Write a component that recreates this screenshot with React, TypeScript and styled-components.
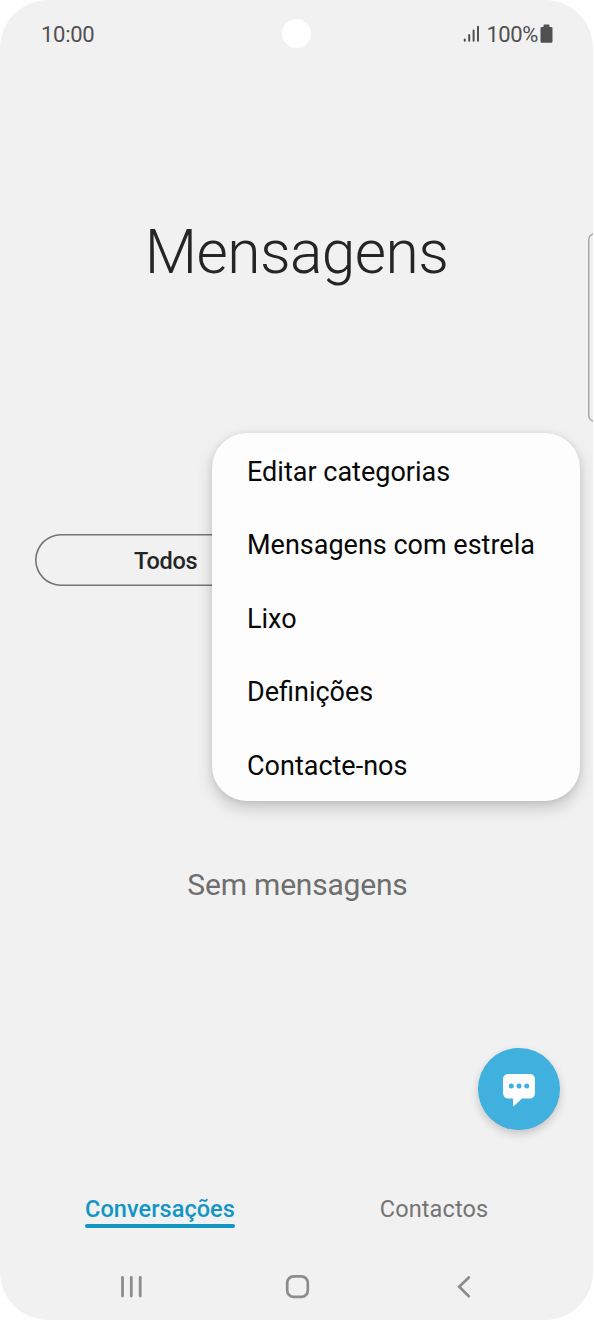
import React from "react";
import styled, { createGlobalStyle } from "styled-components";

const GlobalStyle = createGlobalStyle`
  * { box-sizing: border-box; }
  body { margin: 0; background: #fff; font-family: Roboto, "Noto Sans", sans-serif; }
  button { font: inherit; color: inherit; background: none; border: 0; padding: 0; }
`;

const Screen = styled.div`
  position: relative;
  display: flex;
  flex-direction: column;
  width: 593px;
  height: 1320px;
  background: #f1f1f1;
  border-radius: 48px;
  overflow: hidden;
`;

const StatusBar = styled.header`
  display: grid;
  grid-template-columns: 1fr 29px 1fr;
  align-items: center;
  height: 68px;
  padding: 0 40px 0 41px;
  color: #505050;
  font-size: 22px;
  line-height: 26px;
`;

const Clock = styled.span`
  padding-top: 2px;
  letter-spacing: -0.3px;
`;

const Camera = styled.div`
  width: 29px;
  height: 29px;
  margin: -1px 0 0 -1px;
  border-radius: 50%;
  background: #fff;
`;

const StatusIcons = styled.div`
  display: flex;
  justify-content: flex-end;
  align-items: center;
`;

const BatteryLabel = styled.span`
  margin: 0 2px 0 6px;
  padding-top: 2px;
  letter-spacing: -0.4px;
`;

const TitleArea = styled.div`
  display: flex;
  justify-content: center;
  align-items: center;
  height: 370px;
`;

const Title = styled.h1`
  margin: 0;
  color: #252525;
  font-size: 60.5px;
  font-weight: 300;
  line-height: 72px;
  letter-spacing: -0.6px;
`;

const Categories = styled.div`
  display: flex;
  height: 52px;
  margin: 96px 34px 0 34.5px;
  box-shadow: inset 0 0 0 1.6px #757575;
  border-radius: 26px;
`;

const Category = styled.button`
  flex: 1;
  padding-top: 2px;
  color: #252525;
  font-size: 23.5px;
  font-weight: 500;
  letter-spacing: -0.3px;
`;

const EmptyState = styled.main`
  flex: 1;
  padding: 281px 0 0 2px;
  text-align: center;
  color: #6e6e6e;
  font-size: 30px;
  line-height: 36px;
  letter-spacing: -0.2px;
`;

const Tabs = styled.nav`
  display: flex;
  height: 58px;
  padding: 0 22px 0 23px;
`;

const TabSlot = styled.div`
  flex: 1;
  display: flex;
  justify-content: center;
  align-items: flex-start;
`;

const Tab = styled.button<{ $active?: boolean }>`
  height: 34px;
  line-height: 28px;
  font-size: 23.5px;
  letter-spacing: ${(p) => (p.$active ? "0.05px" : "0.12px")};
  font-weight: ${(p) => (p.$active ? 500 : 400)};
  color: ${(p) => (p.$active ? "#1296c4" : "#757575")};
  display: flex;
  flex-direction: column;
  &::after {
    content: "";
    height: 3.5px;
    width: 100%;
    margin-top: 1px;
    border-radius: 2px;
    background: ${(p) => (p.$active ? "#1296c4" : "transparent")};
  }
`;

const SystemNav = styled.footer`
  display: flex;
  justify-content: space-between;
  align-items: center;
  height: 67px;
  padding: 0 115px 0 117px;
`;

const EdgeHandle = styled.div`
  position: absolute;
  top: 233px;
  right: -8px;
  width: 13px;
  height: 189px;
  box-shadow: inset 0 0 0 1.5px #a8a8a8;
  border-radius: 7px;
`;

const Menu = styled.ul`
  position: absolute;
  top: 433px;
  left: 212px;
  width: 368px;
  height: 368px;
  margin: 0;
  padding: 0;
  list-style: none;
  display: flex;
  flex-direction: column;
  border-radius: 35px;
  background: #fdfdfd;
  box-shadow: 0 7px 16px rgba(0, 0, 0, 0.18), 0 1px 6px rgba(0, 0, 0, 0.08);
`;

const MenuItem = styled.li`
  flex: 1;
  display: flex;
  align-items: center;
  padding: 3.6px 0 0 35px;
  color: #080808;
  font-size: 27px;
`;

const ComposeButton = styled.button`
  position: absolute;
  top: 1048px;
  left: 478px;
  width: 81.5px;
  height: 81.5px;
  display: flex;
  align-items: center;
  justify-content: center;
  padding-top: 2px;
  border-radius: 50%;
  background: #40b0de;
  box-shadow: 0 4px 8px rgba(0, 0, 0, 0.18);
`;

const SignalIcon = () => (
  <svg width="17" height="18" viewBox="0 0 17 18" stroke="#505050" strokeWidth="2" strokeLinecap="round">
    <path d="M1.8 14.600v1.200M6.200 10v5.800M10.600 5.500v10.300M15 1.800v14" />
  </svg>
);

const BatteryIcon = () => (
  <svg width="13" height="20" viewBox="0 0 13 20" fill="#505050">
    <path d="M3.500 1.600Q3.500.6 4.500.6h4q1 0 1 1V3h1.700Q12.500 3 12.500 4.300v13q0 1.500-1.300 1.500H1.800Q.5 18.800.5 17.300v-13Q.5 3 1.800 3h1.700z" />
  </svg>
);

const ChatIcon = () => (
  <svg width="34" height="34" viewBox="0 0 34 34">
    <path
      fill="#fcfcfc"
      d="M6.5 1h21Q33 1 33 6.5v13Q33 25.5 27.5 25.5H20l-7.7 7.2q-1.3 1-1.3-.7v-6.5H6.5Q1 25.5 1 19.5v-13Q1 1 6.5 1z"
    />
    <g fill="#40b0de">
      <circle cx="9.3" cy="13" r="2.5" />
      <circle cx="17" cy="13" r="2.5" />
      <circle cx="24.7" cy="13" r="2.5" />
    </g>
  </svg>
);

const RecentsIcon = () => (
  <svg width="28" height="28" viewBox="0 0 28 28" stroke="#8c8c8c" strokeWidth="2.8" strokeLinecap="round">
    <path d="M5.5 4.500v18.500M14.300 4.500v18.500M23.200 4.500v18.500" />
  </svg>
);

const HomeIcon = () => (
  <svg width="28" height="28" viewBox="0 0 28 28" fill="none" stroke="#8c8c8c" strokeWidth="2.7">
    <rect x="3.2" y="3.3" width="20.6" height="20.6" rx="6.5" />
  </svg>
);

const BackIcon = () => (
  <svg width="28" height="28" viewBox="0 0 28 28" fill="none" stroke="#8c8c8c" strokeWidth="2.7" strokeLinecap="round">
    <path d="M18.8 4.5 9.2 13.8 18.8 23.2" />
  </svg>
);

const menuItems = ["Editar categorias", "Mensagens com estrela", "Lixo", "Definições", "Contacte-nos"];

export default function App() {
  return (
    <>
      <GlobalStyle />
      <Screen>
        <StatusBar>
          <Clock>10:00</Clock>
          <Camera />
          <StatusIcons>
            <SignalIcon />
            <BatteryLabel>100%</BatteryLabel>
            <BatteryIcon />
          </StatusIcons>
        </StatusBar>
        <TitleArea>
          <Title>Mensagens</Title>
        </TitleArea>
        <Categories>
          <Category>Todos</Category>
          <Category aria-label="Adicionar" />
        </Categories>
        <EmptyState>Sem mensagens</EmptyState>
        <Tabs>
          <TabSlot>
            <Tab $active>Conversações</Tab>
          </TabSlot>
          <TabSlot>
            <Tab>Contactos</Tab>
          </TabSlot>
        </Tabs>
        <SystemNav>
          <RecentsIcon />
          <HomeIcon />
          <BackIcon />
        </SystemNav>
        <EdgeHandle />
        <Menu>
          {menuItems.map((item) => (
            <MenuItem key={item}>{item}</MenuItem>
          ))}
        </Menu>
        <ComposeButton aria-label="Nova mensagem">
          <ChatIcon />
        </ComposeButton>
      </Screen>
    </>
  );
}
